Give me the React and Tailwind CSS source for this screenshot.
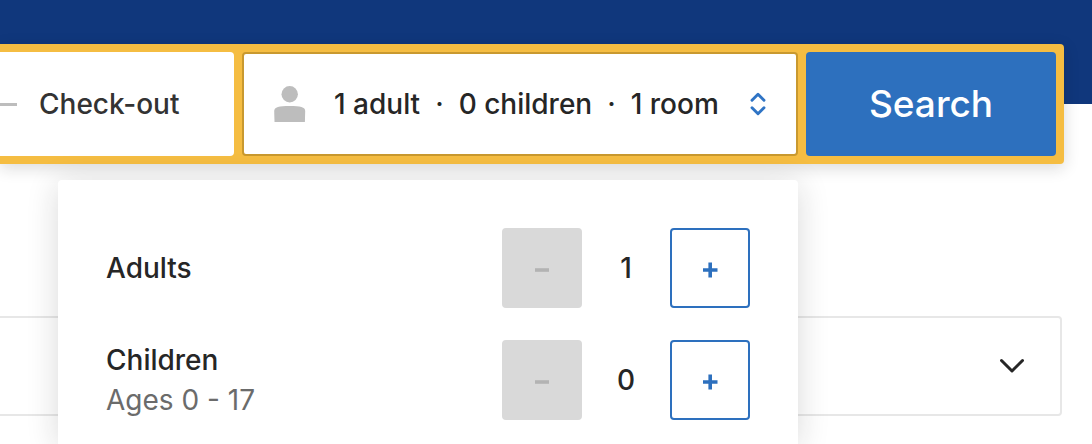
import { useState } from "react";

function PersonIcon() {
  return (
    <svg className="h-10 w-8 shrink-0 text-[#bdbdbd]" viewBox="0 0 32 40" fill="currentColor" aria-hidden="true">
      <circle cx="15.700" cy="10.200" r="8.200" />
      <path d="M.2 27C.2 23 5 22 15.700 22s15.500 1 15.500 5l-.3 11H.5Z" />
    </svg>
  );
}

function SelectorIcon() {
  return (
    <svg className="h-6 w-4 shrink-0 text-[#2f74c5]" viewBox="0 0 16 24" fill="none" stroke="currentColor" strokeWidth="2.900" strokeLinecap="round" strokeLinejoin="round" aria-hidden="true">
      <path d="M2 8.200 8 2.200l6 6M2 15.800l6 6 6-6" />
    </svg>
  );
}

function Stepper({ id, label, hint, min, initial }) {
  const [value, setValue] = useState(initial);
  const atMin = value <= min;
  return (
    <div className="flex h-20 items-center justify-between" role="group" aria-labelledby={id}>
      <div className="flex flex-col leading-10">
        <span id={id} className="text-[28px] font-medium text-[#262626]">{label}</span>
        {hint && <span className="text-[28px] text-[#6b6b6b]">{hint}</span>}
      </div>
      <div className="flex items-center">
        <button
          type="button"
          disabled={atMin}
          aria-label={`Decrease ${label}`}
          onClick={() => setValue(value - 1)}
          className="flex size-20 items-center justify-center rounded-sm border-2 border-[#2d70be] text-[#2d70be] disabled:border-[#d9d9d9] disabled:bg-[#d9d9d9] disabled:text-[#b3b3b3]"
        >
          <svg className="size-5" viewBox="0 0 20 20" stroke="currentColor" strokeWidth="3.600" aria-hidden="true">
            <path d="M3 12h14" />
          </svg>
        </button>
        <output className="w-[88px] text-center text-[28px] font-medium text-[#262626]">{value}</output>
        <button
          type="button"
          aria-label={`Increase ${label}`}
          onClick={() => setValue(value + 1)}
          className="flex size-20 items-center justify-center rounded-sm border-2 border-[#2d70be] bg-white text-[#2d70be]"
        >
          <svg className="size-5" viewBox="0 0 20 20" stroke="currentColor" strokeWidth="3.600" aria-hidden="true">
            <path d="M3 12h14.500M10.200 4.500v15" />
          </svg>
        </button>
      </div>
    </div>
  );
}

export default function App() {
  return (
    <div className="min-h-screen overflow-hidden bg-white font-['Inter','Liberation_Sans',sans-serif]">
      <header className="h-[104px] bg-[#10377c] pt-11 pr-7">
        <form
          className="relative z-10 flex gap-2 rounded-r-sm bg-[#f5bd42] py-2 pr-2 shadow-[0_4px_16px_rgba(26,26,26,0.16)]"
          onSubmit={(e) => e.preventDefault()}
        >
          <button type="button" className="flex h-[104px] flex-1 items-center gap-[22px] rounded-r-sm bg-white text-[28px] font-medium text-[#333333]">
            <span className="h-[3px] w-[17px] bg-[#bdbdbd]" />
            Check-out
          </button>
          <div className="relative w-[556px]">
            <button
              type="button"
              aria-expanded="true"
              className="flex h-[104px] w-full items-center rounded-sm border-2 border-[#c9992f] bg-white px-[30px] text-[28px] font-medium text-[#262626]"
            >
              <PersonIcon />
              <span className="ml-7 flex flex-1 gap-[15px] whitespace-nowrap">
                <span>1 adult</span>
                <span>·</span>
                <span>0 children</span>
                <span>·</span>
                <span>1 room</span>
              </span>
              <SelectorIcon />
            </button>
            <div className="absolute top-full right-0 mt-6 flex w-[740px] flex-col gap-8 rounded-t-sm bg-white px-12 pt-12 pb-6 shadow-[0_4px_32px_rgba(26,26,26,0.16)]">
              <Stepper id="adults" label="Adults" min={1} initial={1} />
              <Stepper id="children" label="Children" hint="Ages 0 - 17" min={0} initial={0} />
            </div>
          </div>
          <button type="submit" className="w-[250px] rounded-sm bg-[#2d70be] text-[37px] font-medium text-white">
            Search
          </button>
        </form>
      </header>
      <main className="pt-[212px] pr-[30px] pb-7">
        <button
          type="button"
          aria-label="Show more"
          className="flex h-[100px] w-full items-center justify-end rounded-r-sm border-2 border-l-0 border-[#e7e7e7] pr-9 text-[#262626]"
        >
          <svg className="h-4 w-6" viewBox="0 0 24 16" fill="none" stroke="currentColor" strokeWidth="3" strokeLinecap="round" strokeLinejoin="round" aria-hidden="true">
            <path d="M1.500 2.500 12 13 22.500 2.500" />
          </svg>
        </button>
      </main>
    </div>
  );
}
